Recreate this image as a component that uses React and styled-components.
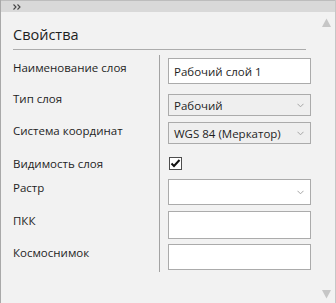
import React from "react";
import styled, { createGlobalStyle } from "styled-components";

const GlobalStyle = createGlobalStyle`
  html, body {
    margin: 0;
    padding: 0;
    background: #f2f2f2;
  }
  body {
    font-family: "Open Sans", "Noto Sans", sans-serif;
  }
`;

const fields = [
  { label: "Наименование слоя", kind: "input", value: "Рабочий слой 1", top: 3, labelTop: 5, height: 26 },
  { label: "Тип слоя", kind: "select", value: "Рабочий", top: 10, labelTop: 7, height: 22 },
  { label: "Система координат", kind: "select", value: "WGS 84 (Меркатор)", top: 6, labelTop: 7, height: 22 },
  { label: "Видимость слоя", kind: "checkbox", checked: true, top: 13, labelTop: 12, height: 13 },
  { label: "Растр", kind: "select", value: "", top: 7, labelTop: 8, height: 26, white: true },
  { label: "ПКК", kind: "input", value: "", top: 6, labelTop: 8, height: 28 },
  { label: "Космоснимок", kind: "input", value: "", top: 5, labelTop: 6, height: 26, last: true },
];

const Panel = styled.div`
  width: 336px;
  height: 303px;
  box-sizing: border-box;
  border-left: 1px solid #a9a9a9;
  border-right: 1px solid #c6c6c6;
  background: #f2f2f2;
  display: flex;
  flex-direction: column;
  overflow: hidden;
`;

const TopBar = styled.div`
  height: 12px;
  flex: none;
  box-sizing: border-box;
  border-top: 1px solid #bdbdbd;
  background: #d9d9d9;
  display: flex;
  align-items: center;
  padding-left: 12px;
`;

const Body = styled.div`
  flex: 1;
  display: flex;
  min-height: 0;
`;

const Content = styled.div`
  flex: 1;
  padding-left: 12px;
`;

const Title = styled.div`
  margin: 13px 12px 0 0;
  padding-bottom: 5px;
  border-bottom: 1px solid #acacac;
  font-size: 14.5px;
  line-height: 19px;
  color: #1e1e1e;
`;

const Form = styled.div`
  margin-top: 5px;
`;

const Row = styled.div`
  display: grid;
  grid-template-columns: 146px 1fr;
`;

const Label = styled.div`
  padding-top: ${(p) => p.$top}px;
  font-size: 11.5px;
  line-height: 16px;
  color: #1e1e1e;
  white-space: nowrap;
`;

const Cell = styled.div`
  border-left: 1px solid #a3a3a3;
  padding: ${(p) => p.$top}px 0 ${(p) => (p.$last ? 2 : 0)}px 8px;
`;

const Box = styled.div`
  width: 143px;
  height: ${(p) => p.$h}px;
  box-sizing: border-box;
  border: 1px solid #ababab;
  background: ${(p) => (p.$grey ? "#efefef" : "#ffffff")};
  display: flex;
  align-items: center;
  justify-content: space-between;
  padding: 0 6px 0 5px;
  font-size: 11.5px;
  color: #1e1e1e;
  white-space: nowrap;
`;

const Check = styled.div`
  width: 13px;
  height: 13px;
  margin-left: 1px;
  box-sizing: border-box;
  border: 1px solid #4d4d4d;
  background: #ffffff;
  display: flex;
  align-items: center;
  justify-content: center;
`;

const ScrollBar = styled.div`
  width: 17px;
  flex: none;
  display: flex;
  flex-direction: column;
  justify-content: space-between;
  align-items: center;
  padding: 6px 0 4px;
`;

const Arrow = ({ down }) => (
  <svg width="9" height="9" viewBox="0 0 9 9">
    <polygon points={down ? "0,0 9,0 4.5,8.5" : "4.5,0.5 9,9 0,9"} fill="#c6c6c6" />
  </svg>
);

const Chevron = () => (
  <svg width="7" height="5" viewBox="0 0 7 5">
    <polyline points="0.5,0.8 3.5,3.8 6.5,0.8" fill="none" stroke="#a6a6a6" strokeWidth="1" />
  </svg>
);

const Control = ({ field }) => {
  if (field.kind === "checkbox") {
    return (
      <Check>
        {field.checked && (
          <svg width="11" height="9" viewBox="0 0 11 9">
            <polyline points="1.5,4.5 4,7 9.5,1" fill="none" stroke="#111" strokeWidth="2" />
          </svg>
        )}
      </Check>
    );
  }
  const isSelect = field.kind === "select";
  return (
    <Box $h={field.height} $grey={isSelect && !field.white}>
      <span>{field.value}</span>
      {isSelect && <Chevron />}
    </Box>
  );
};

export default function App() {
  return (
    <>
      <GlobalStyle />
      <Panel>
        <TopBar>
          <svg width="9" height="6" viewBox="0 0 9 6">
            <polyline points="0.5,0.5 3,3 0.5,5.5" fill="none" stroke="#444" strokeWidth="1.1" />
            <polyline points="4.5,0.5 7,3 4.5,5.5" fill="none" stroke="#444" strokeWidth="1.1" />
          </svg>
        </TopBar>
        <Body>
          <Content>
            <Title>Свойства</Title>
            <Form>
              {fields.map((f) => (
                <Row key={f.label}>
                  <Label $top={f.labelTop}>{f.label}</Label>
                  <Cell $top={f.top} $last={f.last}>
                    <Control field={f} />
                  </Cell>
                </Row>
              ))}
            </Form>
          </Content>
          <ScrollBar>
            <Arrow />
            <Arrow down />
          </ScrollBar>
        </Body>
      </Panel>
    </>
  );
}
